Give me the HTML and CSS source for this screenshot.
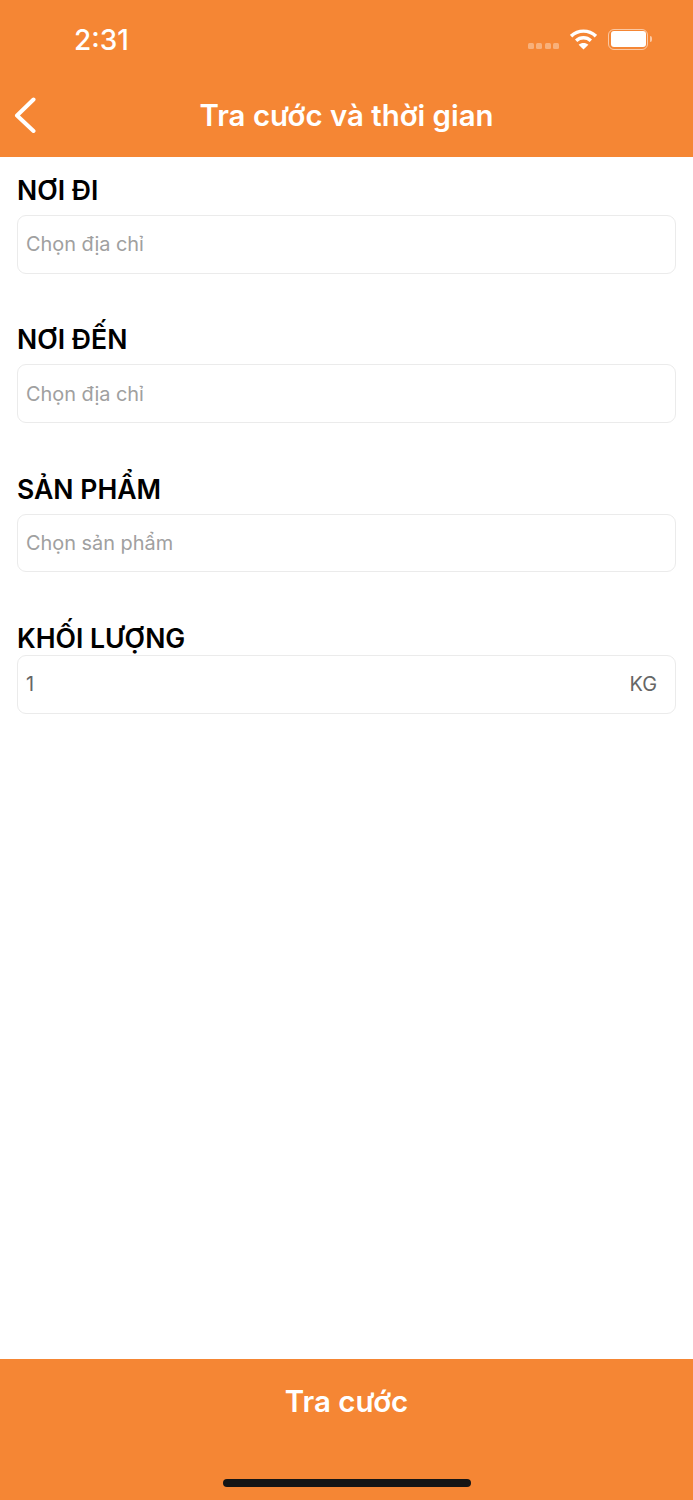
FILE: index.html
```html
<!DOCTYPE html>
<html lang="vi">
<head>
  <meta charset="UTF-8">
  <title>Tra cước và thời gian</title>
  <link rel="stylesheet" href="styles.css">
</head>
<body>
  <header class="top-bar">
    <div class="status-bar">
      <span class="status-time">2:31</span>
      <div class="status-icons">
        <div class="signal-dots"><i></i><i></i><i></i><i></i></div>
        <svg class="wifi" width="27" height="21" viewBox="0 0 28 22">
          <path d="M1 7.5C8.500 .5 19.500 .5 27 7.500" fill="none" stroke="#fff" stroke-width="3.600"/>
          <path d="M6.300 12.300C10.800 8.200 17.200 8.200 21.700 12.300" fill="none" stroke="#fff" stroke-width="3.600"/>
          <path d="M14 21.500L8.900 16.500C11.800 13.900 16.200 13.900 19.100 16.500Z" fill="#fff"/>
        </svg>
        <div class="battery"><div class="battery-fill"></div></div>
        <div class="battery-cap"></div>
      </div>
    </div>
    <div class="nav-bar">
      <svg class="back-icon" width="24" height="36" viewBox="0 0 24 36">
        <path d="M20.500 2.500L4 18.500L20.500 34" fill="none" stroke="#fff" stroke-width="4" stroke-linecap="round" stroke-linejoin="round"/>
      </svg>
      <h1>Tra cước và thời gian</h1>
    </div>
  </header>

  <main class="form">
    <div class="field">
      <label>NƠI ĐI</label>
      <div class="input-box placeholder">Chọn địa chỉ</div>
    </div>
    <div class="field">
      <label>NƠI ĐẾN</label>
      <div class="input-box placeholder">Chọn địa chỉ</div>
    </div>
    <div class="field">
      <label>SẢN PHẨM</label>
      <div class="input-box placeholder">Chọn sản phẩm</div>
    </div>
    <div class="field field-weight">
      <label>KHỐI LƯỢNG</label>
      <div class="input-box value">
        <span>1</span>
        <span class="unit">KG</span>
      </div>
    </div>
  </main>

  <footer class="bottom-bar">
    <button class="submit-btn">Tra cước</button>
    <div class="home-indicator"></div>
  </footer>
</body>
</html>
```

FILE: styles.css
```css
* {
  box-sizing: border-box;
}

body {
  margin: 0;
  min-height: 1500px;
  display: flex;
  flex-direction: column;
  font-family: Inter, 'Liberation Sans', sans-serif;
  background-color: #fff;
}

.top-bar {
  height: 157px;
  background-color: #f58634;
  color: #fff;
}

.status-bar {
  height: 78px;
  display: flex;
  justify-content: space-between;
  align-items: center;
  padding: 0 41px 0 74px;
}

.status-time {
  padding-top: 2px;
  font-size: 28px;
  font-weight: 500;
}

.status-icons {
  display: flex;
  align-items: center;
}

.signal-dots {
  display: flex;
  gap: 2.3px;
  margin: 14px 11px 0 0;
}

.signal-dots i {
  width: 6px;
  height: 6px;
  border-radius: 1.5px;
  background-color: rgba(255,255,255,0.35);
}

.wifi {
  margin-right: 11px;
}

.battery {
  width: 40px;
  height: 21px;
  padding: 1.5px;
  border: 1.5px solid rgba(255,255,255,0.55);
  border-radius: 6px;
}

.battery-fill {
  height: 100%;
  border-radius: 3px;
  background-color: #fff;
}

.battery-cap {
  width: 2px;
  height: 6px;
  margin-left: 2px;
  border-radius: 0 2px 2px 0;
  background-color: rgba(255,255,255,0.55);
}

.nav-bar {
  height: 79px;
  display: flex;
  align-items: center;
  padding: 0 13px 5px;
}

.back-icon {
  flex-shrink: 0;
}

.nav-bar h1 {
  flex: 1;
  margin: 0 24px 0 0;
  text-align: center;
  font-size: 29.4px;
  font-weight: 600;
}

.form {
  flex: 1;
  padding: 17px 17px 0;
}

.field {
  margin-bottom: 49.8px;
}

.field label {
  display: block;
  height: 32px;
  margin-bottom: 9px;
  line-height: 32px;
  font-size: 26.6px;
  font-weight: 600;
  color: #000;
}

.field-weight label {
  margin-bottom: 1px;
}

.input-box {
  height: 58.6px;
  display: flex;
  justify-content: space-between;
  align-items: center;
  padding: 0 18px 0 8px;
  border: 1px solid #ebebeb;
  border-radius: 9px;
  font-size: 19.9px;
}

.placeholder {
  color: #a0a0a0;
}

.value {
  color: #666;
}

.bottom-bar {
  height: 141px;
  display: flex;
  flex-direction: column;
  align-items: center;
  padding-top: 20px;
  background-color: #f58634;
}

.submit-btn {
  height: 44px;
  padding: 0;
  border: none;
  background: none;
  color: #fff;
  font-family: inherit;
  font-size: 29.5px;
  font-weight: 600;
}

.home-indicator {
  width: 248px;
  height: 8px;
  margin-top: 56px;
  border-radius: 4px;
  background-color: #151515;
}
```
